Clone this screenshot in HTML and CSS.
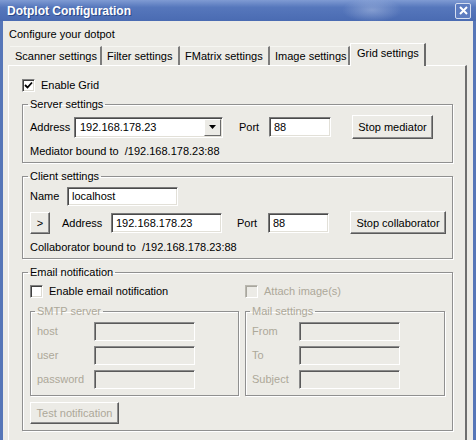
FILE: index.html
```html
<!DOCTYPE html>
<html lang="en">
<head>
    <meta charset="UTF-8">
    <title>Dotplot Configuration</title>
    <link rel="stylesheet" href="styles.css">
</head>
<body>

    <div class="window">
        <div class="titlebar">
            <span class="title">Dotplot Configuration</span>
            <span class="close">
                <svg width="11" height="11" viewBox="0 0 11 11"><path d="M2 2 L9 9 M9 2 L2 9" stroke="#fff" stroke-width="2"/></svg>
            </span>
        </div>

        <div class="client">
            <div class="caption">Configure your dotpot</div>

            <div class="tabs">
                <div class="tab tab-scanner">Scanner settings</div>
                <div class="tab tab-filter">Filter settings</div>
                <div class="tab tab-fmatrix">FMatrix settings</div>
                <div class="tab tab-image">Image settings</div>
                <div class="tab tab-grid active">Grid settings</div>
            </div>

            <div class="panel">
                <div class="check-row">
                    <span class="box"><svg width="9" height="9" viewBox="0 0 9 9"><path d="M1 4 L3.5 6.5 L8 1.5" fill="none" stroke="#000" stroke-width="1.8"/></svg></span>
                    <span>Enable Grid</span>
                </div>

                <!-- server -->
                <fieldset class="group server">
                    <legend>Server settings</legend>
                    <div class="row row-server">
                        <span class="lbl lbl-address">Address</span>
                        <div class="combo">
                            <span class="combo-text">192.168.178.23</span>
                            <span class="drop"><svg width="7" height="4" viewBox="0 0 7 4"><path d="M0 0 H7 L3.5 4 Z" fill="#000"/></svg></span>
                        </div>
                        <span class="lbl lbl-port">Port</span>
                        <input class="field field-port" value="88">
                        <button class="btn btn-mediator">Stop mediator</button>
                    </div>
                    <div class="status">Mediator bound to &nbsp;/192.168.178.23:88</div>
                </fieldset>

                <!-- client -->
                <fieldset class="group client-set">
                    <legend>Client settings</legend>
                    <div class="row row-name">
                        <span class="lbl lbl-name">Name</span>
                        <input class="field field-name" value="localhost">
                    </div>
                    <div class="row row-client">
                        <button class="btn btn-arrow">&gt;</button>
                        <span class="lbl lbl-caddress">Address</span>
                        <input class="field field-caddress" value="192.168.178.23">
                        <span class="lbl lbl-cport">Port</span>
                        <input class="field field-cport" value="88">
                        <button class="btn btn-collab">Stop collaborator</button>
                    </div>
                    <div class="status status-client">Collaborator bound to &nbsp;/192.168.178.23:88</div>
                </fieldset>

                <!-- email -->
                <fieldset class="group email">
                    <legend>Email notification</legend>
                    <div class="row row-email">
                        <div class="check-row enable-mail">
                            <span class="box"></span>
                            <span>Enable email notification</span>
                        </div>
                        <div class="check-row disabled">
                            <span class="box"></span>
                            <span>Attach image(s)</span>
                        </div>
                    </div>

                    <div class="subgroups">
                        <fieldset class="group sub smtp disabled">
                            <legend>SMTP server</legend>
                            <div class="row sub-row">
                                <span class="lbl lbl-smtp">host</span>
                                <input class="field field-sub" disabled>
                            </div>
                            <div class="row sub-row">
                                <span class="lbl lbl-smtp">user</span>
                                <input class="field field-sub" disabled>
                            </div>
                            <div class="row sub-row">
                                <span class="lbl lbl-smtp">password</span>
                                <input class="field field-sub" disabled>
                            </div>
                        </fieldset>

                        <fieldset class="group sub mail disabled">
                            <legend>Mail settings</legend>
                            <div class="row sub-row">
                                <span class="lbl lbl-mail">From</span>
                                <input class="field field-sub" disabled>
                            </div>
                            <div class="row sub-row">
                                <span class="lbl lbl-mail">To</span>
                                <input class="field field-sub" disabled>
                            </div>
                            <div class="row sub-row">
                                <span class="lbl lbl-mail">Subject</span>
                                <input class="field field-sub" disabled>
                            </div>
                        </fieldset>
                    </div>

                    <button class="btn btn-test" disabled>Test notification</button>
                </fieldset>
            </div>
        </div>
    </div>

</body>
</html>
```

FILE: styles.css
```css
body {
    margin: 0;
    background-color: #ecebe6;
    font-family: "Liberation Sans", Arial, sans-serif;
    font-size: 11px;
    color: #000;
}

.window {
    width: 476px;
    height: 440px;
    overflow: hidden;
    background-color: #5676b8;
}

/* title bar */
.titlebar {
    height: 21px;
    display: flex;
    align-items: center;
    justify-content: space-between;
    padding: 0 5px 0 7px;
    background:
        radial-gradient(ellipse 30px 12px at 372px 10px, rgba(190, 205, 235, 0.45), rgba(190, 205, 235, 0) 100%),
        linear-gradient(to bottom, #7f9bd3 0%, #5677bc 35%, #4a6bb2 100%);
}

.title {
    color: #fff;
    font-weight: bold;
    font-size: 12px;
    text-shadow: 1px 1px 0 #2c4a8a;
}

.close {
    width: 14px;
    height: 14px;
    display: flex;
    align-items: center;
    justify-content: center;
    border: 1px solid #d6def0;
    border-radius: 2px;
    background-color: #5d7cc0;
}

.client {
    height: 419px;
    margin: 0 3px;
    padding: 0 6px 0 5px;
    background-color: #ecebe6;
}

.caption {
    padding-top: 6px;
    line-height: 14px;
    padding-left: 1px;
}

/* tabs */
.tabs {
    display: flex;
    align-items: flex-end;
    height: 22px;
    margin-top: 2px;
    padding-left: 2px;
}

.tab {
    box-sizing: border-box;
    height: 19px;
    line-height: 18px;
    padding-left: 5px;
    white-space: nowrap;
    border-right: 2px solid #7c7c7c;
    border-top: 1px solid #f6f6f2;
}

.tab-scanner { width: 92px; }
.tab-filter { width: 78px; }
.tab-fmatrix { width: 90px; }
.tab-image { width: 80px; }

.tab.active {
    width: 76px;
    height: 23px;
    margin-bottom: -1px;
    line-height: 18px;
    padding-left: 6px;
    border-top: 1px solid #fff;
    border-left: 1px solid #fff;
    border-right: 2px solid #6a6a6a;
    background-color: #ecebe6;
}

.panel {
    height: 400px;
    border-top: 1px solid #fff;
    border-left: 1px solid #fff;
    border-right: 2px solid #6e6e6e;
    padding: 12px 12px 0 13px;
}

/* checkbox */
.check-row {
    display: flex;
    align-items: center;
    height: 14px;
    gap: 6px;
}

.box {
    box-sizing: border-box;
    width: 13px;
    height: 13px;
    display: flex;
    align-items: center;
    justify-content: center;
    background-color: #fff;
    border: 1px solid;
    border-color: #808080 #fff #fff #808080;
    box-shadow: inset 1px 1px 0 #404040, inset -1px -1px 0 #dcdad2;
}

.check-row.disabled {
    color: #aca899;
}

.check-row.disabled .box {
    background-color: #ecebe6;
    border-color: #b9b7ae #fff #fff #b9b7ae;
    box-shadow: inset 1px 1px 0 #a8a69e;
}

/* group boxes */
.group {
    margin: 5px 0 0 0;
    padding: 4px 6px 4px 7px;
    border: 1px solid #909090;
    box-shadow: inset 1px 1px 0 #fff, 1px 1px 0 #fff;
}

.group legend {
    padding: 0 2px;
    margin-left: -2px;
    line-height: 14px;
}

.group.client-set {
    margin-top: 6px;
    padding-top: 3px;
}

.group.email {
    margin-top: 6px;
    padding: 5px 6px 6px 7px;
}

.row {
    display: flex;
    align-items: center;
}

.row-server {
    height: 24px;
}

.lbl {
    white-space: nowrap;
}

.lbl-address { width: 44px; }
.lbl-port { width: 30px; margin-left: 16px; }
.lbl-name { width: 37px; }
.lbl-caddress { width: 49px; margin-left: 12px; }
.lbl-cport { width: 31px; margin-left: 15px; }
.lbl-smtp { width: 57px; }
.lbl-mail { width: 47px; }

/* text fields */
.field {
    box-sizing: border-box;
    height: 20px;
    margin: 0;
    padding: 0 0 0 4px;
    font-family: inherit;
    font-size: 11px;
    color: #000;
    background-color: #fff;
    border: 1px solid;
    border-color: #7a7a7a #fff #fff #7a7a7a;
    box-shadow: inset 1px 1px 0 #4a4a4a, inset -1px -1px 0 #e2e0d8;
    outline: none;
}

.field-port { width: 62px; }
.field-name { width: 111px; height: 19px; }
.field-caddress { width: 111px; }
.field-cport { width: 61px; }

.field-sub {
    width: 101px;
    height: 19px;
    background-color: #ecebe6;
    border-color: #8a8a8a #fff #fff #8a8a8a;
    box-shadow: inset 1px 1px 0 #5a5a5a;
}

.combo {
    box-sizing: border-box;
    width: 149px;
    height: 21px;
    display: flex;
    align-items: center;
    justify-content: space-between;
    padding-left: 5px;
    background-color: #fff;
    border: 1px solid;
    border-color: #7a7a7a #fff #fff #7a7a7a;
    box-shadow: inset 1px 1px 0 #4a4a4a, inset -1px -1px 0 #e2e0d8;
}

.drop {
    box-sizing: border-box;
    width: 17px;
    height: 17px;
    margin-right: 1px;
    display: flex;
    align-items: center;
    justify-content: center;
    background-color: #ecebe6;
    border: 1px solid;
    border-color: #fff #6a6a6a #6a6a6a #fff;
}

/* buttons */
.btn {
    box-sizing: border-box;
    height: 24px;
    margin: 0;
    padding: 0;
    font-family: inherit;
    font-size: 11px;
    color: #000;
    background-color: #ecebe6;
    border: 1px solid;
    border-color: #fff #5a5a5a #5a5a5a #fff;
    box-shadow: inset -1px -1px 0 #8e8e8e;
}

.btn-mediator { width: 81px; margin-left: 21px; }
.btn-arrow { width: 20px; height: 22px; }
.btn-collab { width: 96px; height: 23px; margin-left: 21px; }

.btn-test {
    display: block;
    width: 89px;
    height: 22px;
    margin-top: 6px;
    color: #aca899;
}

.status {
    margin-top: 5px;
    line-height: 14px;
}

.row-name {
    height: 20px;
}

.row-client {
    height: 23px;
    margin-top: 5px;
}

.status-client {
    margin-top: 6px;
}

.row-email {
    height: 14px;
}

.enable-mail {
    width: 215px;
}

.subgroups {
    display: flex;
    gap: 6px;
    margin-top: 6px;
}

.group.sub {
    margin: 0;
    padding: 3px 6px 6px 6px;
}

.group.disabled {
    color: #aca899;
}

.smtp { width: 209px; box-sizing: border-box; }
.mail { width: 200px; box-sizing: border-box; }

.sub-row {
    height: 20px;
    margin-bottom: 4px;
}

.sub-row:last-child {
    margin-bottom: 0;
}
```
